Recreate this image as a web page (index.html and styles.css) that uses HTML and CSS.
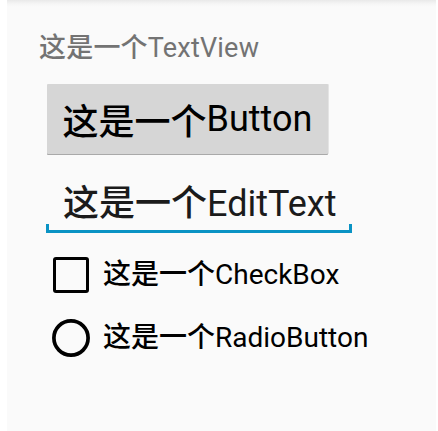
FILE: index.html
```html
<!DOCTYPE html>
<html>
<head>
<meta charset="utf-8">
<link rel="stylesheet" href="styles.css">
</head>
<body>
<div class="screen">
  <div class="tv"><span class="zh">这是一个</span>TextView</div>
  <div class="btn"><span class="zh">这是一个</span>Button</div>
  <div class="edit"><span class="zh">这是一个</span>EditText</div>
  <div class="row check-row">
    <span class="checkbox"></span>
    <span class="label"><span class="zh">这是一个</span>CheckBox</span>
  </div>
  <div class="row radio-row">
    <svg class="radio" width="38" height="38" viewBox="0 0 38 38"><circle cx="19" cy="19" r="17.1" fill="none" stroke="#000" stroke-width="3.7"/></svg>
    <span class="label"><span class="zh">这是一个</span>RadioButton</span>
  </div>
</div>
</body>
</html>
```
FILE: styles.css
```css
html, body {
  margin: 0;
  padding: 0;
  background: #ffffff;
}
body {
  width: 438px;
  height: 431px;
  overflow: hidden;
  font-family: Roboto, "Noto Sans CJK SC", sans-serif;
}
.screen {
  margin-left: 7px;
  margin-right: 2px;
  height: 431px;
  box-sizing: border-box;
  padding: 35px 0 0 32px;
  background: linear-gradient(to bottom, #e9e9e9 0px, #f6f6f6 4px, #fafafa 7px, #fafafa 100%);
  display: flex;
  flex-direction: column;
  align-items: flex-start;
}
.zh {
  font-family: "Noto Sans CJK SC", sans-serif;
  font-weight: 500;
  line-height: 0;
}
.tv {
  font-size: 27px;
  line-height: 27px;
  height: 27px;
  color: #737373;
  white-space: nowrap;
  letter-spacing: 0.2px;
}
.btn {
  margin-top: 22px;
  margin-left: 8px;
  width: 281px;
  height: 70px;
  background: #d6d6d6;
  box-shadow: 0 1px 0 #a9a9a9, 1px 0 0 #e4e4e4;
  border-radius: 1px;
  display: flex;
  align-items: center;
  justify-content: center;
  font-size: 36px;
  line-height: 36px;
  color: #000;
  white-space: nowrap;
}
.edit {
  position: relative;
  margin-top: 16px;
  margin-left: 7px;
  width: 306px;
  height: 63px;
  box-sizing: border-box;
  padding: 16px 0 8px 17px;
  border-bottom: 3px solid #0a93c4;
  font-size: 36px;
  line-height: 36px;
  color: #1b1b1b;
  white-space: nowrap;
}
.edit::before, .edit::after {
  content: "";
  position: absolute;
  bottom: 0;
  width: 3px;
  height: 6px;
  background: #0a93c4;
}
.edit::before { left: 0; }
.edit::after { right: 0; }
.row {
  display: flex;
  align-items: center;
  white-space: nowrap;
}
.check-row {
  margin-top: 24px;
  margin-left: 14px;
  height: 36px;
}
.checkbox {
  width: 36px;
  height: 36px;
  box-sizing: border-box;
  border: 3.8px solid #000;
  border-radius: 3px;
  margin-right: 14px;
}
.radio-row {
  margin-top: 26px;
  margin-left: 13px;
  height: 38px;
}
.radio {
  display: block;
  margin-right: 13px;
}
.label {
  font-size: 28px;
  line-height: 28px;
  color: #000;
}
```
